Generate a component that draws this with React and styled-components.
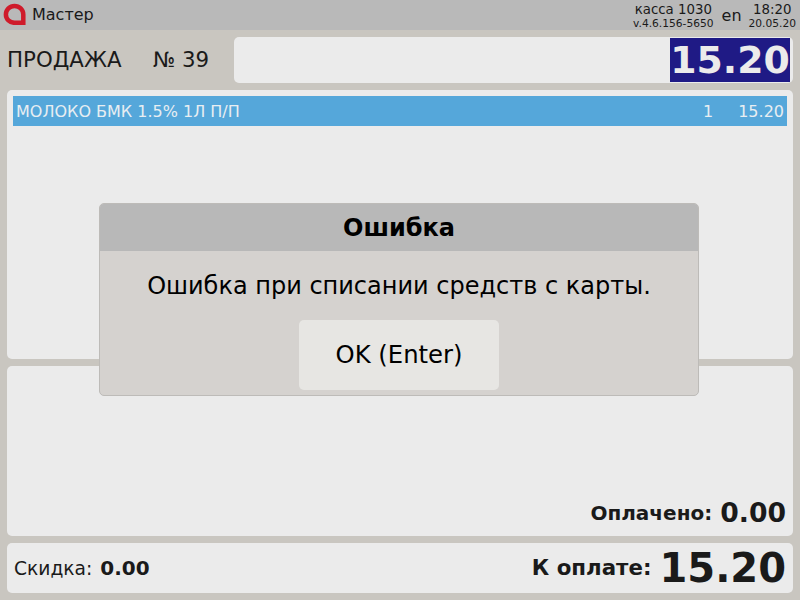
import React from 'react'
import styled, { createGlobalStyle } from 'styled-components'

const Global = createGlobalStyle`
  html, body { margin: 0; padding: 0; }
  body {
    width: 800px;
    height: 600px;
    overflow: hidden;
    font-family: "DejaVu Sans", sans-serif;
    background: #c9c6c0;
    color: #1a1a1a;
  }
`

const Screen = styled.div`
  position: relative;
  width: 800px;
  height: 600px;
  display: flex;
  flex-direction: column;
`

const TopBar = styled.div`
  height: 30px;
  background: #b9b9b9;
  display: flex;
  align-items: center;
  padding: 0 4px 0 3px;
`

const LogoMark = styled.svg`
  width: 23px;
  height: 22px;
  margin-bottom: 2px;
`

const Title = styled.span`
  font-size: 16px;
  margin: 0 0 2px 6px;
  flex: 1;
`

const KassaInfo = styled.div`
  display: flex;
  flex-direction: column;
  align-items: center;
  line-height: 14px;
  font-size: 13.33px;
  margin-top: 3px;
`

const Tiny = styled.span`
  font-size: 10.67px;
`

const Lang = styled.span`
  font-size: 16px;
  margin: 0 7px 0 8px;
`

const Content = styled.div`
  flex: 1;
  display: flex;
  flex-direction: column;
  gap: 7px;
  padding: 7px;
`

const SaleRow = styled.div`
  height: 46px;
  display: flex;
  align-items: center;
`

const SaleLabel = styled.span`
  font-size: 21.33px;
  width: 146px;
  margin-bottom: 2px;
`

const SaleNumber = styled.span`
  font-size: 21.33px;
  width: 81px;
  margin-bottom: 2px;
`

const Display = styled.div`
  flex: 1;
  height: 46px;
  background: #ebebeb;
  border-radius: 5px;
  display: flex;
  justify-content: flex-end;
  padding: 1px 3px 1px 0;
  box-sizing: border-box;
`

const DisplayAmount = styled.div`
  width: 120px;
  background: #1f1a85;
  color: #ebebeb;
  font-size: 37.8px;
  font-weight: bold;
  display: flex;
  align-items: center;
  justify-content: center;
`

const Panel = styled.div`
  background: #ebebeb;
  border-radius: 5px;
`

const ListPanel = styled(Panel)`
  height: 269px;
  padding: 6px;
  box-sizing: border-box;
`

const ListRow = styled.div`
  height: 30px;
  background: #55a7da;
  color: #e8eef2;
  display: flex;
  align-items: center;
  font-size: 16px;
  padding: 0 3px;
`

const RowName = styled.span`
  flex: 1;
`

const RowQty = styled.span`
  margin-right: 25px;
`

const PaidPanel = styled(Panel)`
  height: 170px;
  display: flex;
  align-items: flex-end;
  justify-content: flex-end;
  padding: 0 7px 8px;
  box-sizing: border-box;
`

const TotalPanel = styled(Panel)`
  height: 50px;
  display: flex;
  align-items: center;
  padding: 0 7px;
`

const Discount = styled.span`
  font-size: 18.67px;
  flex: 1;
`

const DiscountValue = styled.b`
  font-size: 20px;
  margin-left: 2px;
`

const PaidLabel = styled.b`
  font-size: 20px;
  margin-right: 8px;
  line-height: 30px;
`

const PaidValue = styled.b`
  font-size: 26.67px;
  line-height: 30px;
`

const TotalLabel = styled.b`
  font-size: 21.33px;
  margin: 0 8px 2px 0;
`

const TotalValue = styled.b`
  font-size: 40px;
`

const ModalCard = styled.div`
  position: absolute;
  left: 99px;
  top: 203px;
  width: 600px;
  height: 193px;
  box-sizing: border-box;
  border: 1px solid #bdbbb8;
  border-radius: 5px;
  background: #d5d2cf;
  overflow: hidden;
  color: #000;
  display: flex;
  flex-direction: column;
  align-items: center;
`

const ModalTitle = styled.div`
  align-self: stretch;
  height: 47px;
  background: #b8b8b8;
  font-size: 24px;
  font-weight: bold;
  display: flex;
  align-items: center;
  justify-content: center;
`

const ModalText = styled.div`
  font-size: 24px;
  margin-top: 21px;
  height: 48px;
`

const OkButton = styled.button`
  width: 200px;
  height: 70px;
  border: 0;
  border-radius: 5px;
  background: #e7e6e3;
  color: #000;
  font-family: inherit;
  font-size: 24.3px;
  padding: 0 0 2px;
`

const Logo = () => (
  <LogoMark viewBox="0 0 23 22">
    <path
      d="M11.500 3a8.500 8.300 0 1 0 0 16.800H20.300V11.500a8.800 8.500 0 0 0-8.800-8.500Z"
      fill="none"
      stroke="#cf1b2b"
      strokeWidth="4.500"
    />
  </LogoMark>
)

export default function App() {
  return (
    <Screen>
      <Global />
      <TopBar>
        <Logo />
        <Title>Мастер</Title>
        <KassaInfo>
          <span>касса 1030</span>
          <Tiny>v.4.6.156-5650</Tiny>
        </KassaInfo>
        <Lang>en</Lang>
        <KassaInfo>
          <span>18:20</span>
          <Tiny>20.05.20</Tiny>
        </KassaInfo>
      </TopBar>
      <Content>
        <SaleRow>
          <SaleLabel>ПРОДАЖА</SaleLabel>
          <SaleNumber>№ 39</SaleNumber>
          <Display>
            <DisplayAmount>15.20</DisplayAmount>
          </Display>
        </SaleRow>
        <ListPanel>
          <ListRow>
            <RowName>МОЛОКО БМК 1.5% 1Л П/П</RowName>
            <RowQty>1</RowQty>
            <span>15.20</span>
          </ListRow>
        </ListPanel>
        <PaidPanel>
          <PaidLabel>Оплачено:</PaidLabel>
          <PaidValue>0.00</PaidValue>
        </PaidPanel>
        <TotalPanel>
          <Discount>
            Скидка: <DiscountValue>0.00</DiscountValue>
          </Discount>
          <TotalLabel>К оплате:</TotalLabel>
          <TotalValue>15.20</TotalValue>
        </TotalPanel>
      </Content>
      <ModalCard>
        <ModalTitle>Ошибка</ModalTitle>
        <ModalText>Ошибка при списании средств с карты.</ModalText>
        <OkButton>OK (Enter)</OkButton>
      </ModalCard>
    </Screen>
  )
}
